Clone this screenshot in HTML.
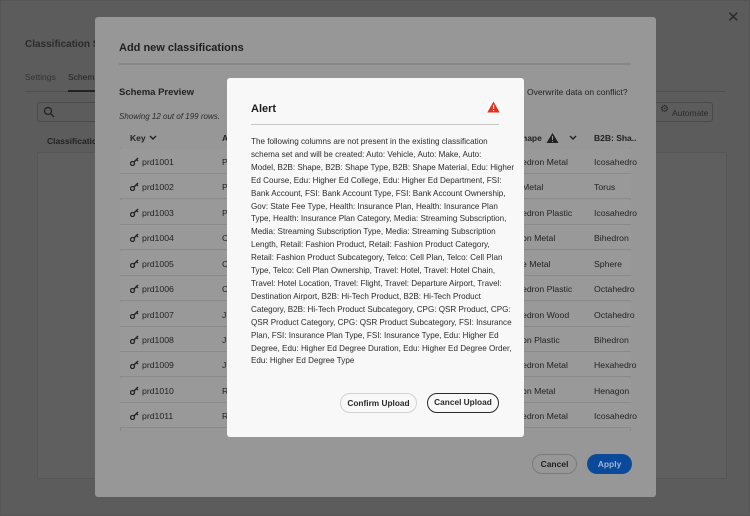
<!DOCTYPE html>
<html><head><meta charset="utf-8"><style>
*{box-sizing:border-box;margin:0;padding:0}
body{width:750px;height:516px;overflow:hidden;background:#5c5c5c;font-family:"Liberation Sans",sans-serif;position:relative;color:#1a1a1a}
.a{position:absolute}
.row{position:absolute;left:120px;width:511px;height:25px;border-bottom:1px solid #8a8a8a;background:#999;font-size:8.7px;color:#222}
.row span{position:absolute;top:8px}
.row svg{position:absolute;left:10px;top:8px}
</style></head><body>
<div class="a" style="left:0;top:0;width:750px;height:516px;border:1px solid #555"></div>
<div class="a" style="left:25px;top:39px;font-size:10px;font-weight:bold;color:#2b2b2b">Classification Se</div>
<div class="a" style="left:25px;top:72px;font-size:8.5px;color:#333">Settings</div>
<div class="a" style="left:68px;top:72px;font-size:8.5px;color:#222">Schema</div>
<div class="a" style="left:25px;top:91px;width:700px;height:1px;background:#4e4e4e"></div>
<div class="a" style="left:68px;top:90px;width:30px;height:2px;background:#222"></div>
<div class="a" style="left:37px;top:102px;width:80px;height:20px;border:1px solid #4a4a4a;border-radius:3px"></div>
<svg class="a" style="left:43px;top:106px" width="12" height="12"><circle cx="5" cy="5" r="3.5" fill="none" stroke="#222" stroke-width="1.3"/><line x1="7.6" y1="7.6" x2="11" y2="11" stroke="#222" stroke-width="1.3"/></svg>
<div class="a" style="left:47px;top:136px;font-size:8.5px;font-weight:bold;color:#222">Classification</div>
<div class="a" style="left:37px;top:152px;width:690px;height:327px;border:1px solid #555;background:#5f5f5f"></div>
<div class="a" style="left:651px;top:102px;width:62px;height:20px;border:1px solid #4a4a4a;border-radius:3px;font-size:8.5px;color:#2a2a2a;padding:5px 0 0 20px">Automate</div>
<div class="a" style="left:660px;top:104px;font-size:10px;color:#2a2a2a">⚙</div>
<div class="a" style="left:727px;top:8px;font-size:15px;color:#2a2a2a">✕</div>

<div class="a" style="left:95px;top:17px;width:561px;height:480px;background:#979797;border-radius:3px"></div>
<div class="a" style="left:119px;top:42px;font-size:11px;font-weight:bold;color:#1f1f1f">Add new classifications</div>
<div class="a" style="left:119px;top:63px;width:512px;height:2px;background:#888"></div>
<div class="a" style="left:119px;top:87px;font-size:9.5px;font-weight:bold;color:#222">Schema Preview</div>
<div class="a" style="left:119px;top:112px;font-size:8px;font-style:italic;color:#2a2a2a">Showing 12 out of 199 rows.</div>
<div class="a" style="left:527px;top:87px;font-size:8.5px;color:#222">Overwrite data on conflict?</div>
<div class="a" style="left:130px;top:133px;font-size:8.5px;font-weight:bold;color:#222">Key</div>
<svg class="a" style="left:149px;top:135px" width="8" height="6"><path d="M1 1L4 4L7 1" fill="none" stroke="#222" stroke-width="1.4"/></svg>
<div class="a" style="left:222px;top:133px;font-size:8.5px;font-weight:bold;color:#222">A</div>
<div class="a" style="left:522px;top:133px;font-size:8.5px;font-weight:bold;color:#222">hape</div>
<svg class="a" style="left:546px;top:132px" width="13" height="12"><path d="M6.5 1L12.5 11H0.5Z" fill="#222"/><rect x="6" y="4" width="1" height="4" fill="#999"/><rect x="6" y="9" width="1" height="1" fill="#999"/></svg>
<svg class="a" style="left:569px;top:135px" width="8" height="6"><path d="M1 1L4 4L7 1" fill="none" stroke="#222" stroke-width="1.4"/></svg>
<div class="a" style="left:594px;top:133px;font-size:8.5px;font-weight:bold;color:#222">B2B: Sha..</div>
<div class="a" style="left:120px;top:148px;width:511px;height:283px;border-left:1px solid #8a8a8a;border-right:1px solid #8a8a8a"></div>
<svg width="0" height="0" style="position:absolute"><defs><g id="key"><circle cx="2.5" cy="6.5" r="2" fill="none" stroke="#222" stroke-width="1.3"/><path d="M4 5L8 1M6.5 2.5L8 4" stroke="#222" stroke-width="1.3" fill="none"/></g></defs></svg>
<div class="row" style="top:149px"><svg width="9" height="9"><use href="#key"/></svg><span style="left:22px">prd1001</span><span style="left:102px">P</span><span style="left:402px">edron Metal</span><span style="left:474px">Icosahedro</span></div>
<div class="row" style="top:174px"><svg width="9" height="9"><use href="#key"/></svg><span style="left:22px">prd1002</span><span style="left:102px">P</span><span style="left:402px">Metal</span><span style="left:474px">Torus</span></div>
<div class="row" style="top:200px"><svg width="9" height="9"><use href="#key"/></svg><span style="left:22px">prd1003</span><span style="left:102px">P</span><span style="left:402px">edron Plastic</span><span style="left:474px">Icosahedro</span></div>
<div class="row" style="top:225px"><svg width="9" height="9"><use href="#key"/></svg><span style="left:22px">prd1004</span><span style="left:102px">C</span><span style="left:402px">on Metal</span><span style="left:474px">Bihedron</span></div>
<div class="row" style="top:251px"><svg width="9" height="9"><use href="#key"/></svg><span style="left:22px">prd1005</span><span style="left:102px">C</span><span style="left:402px">e Metal</span><span style="left:474px">Sphere</span></div>
<div class="row" style="top:276px"><svg width="9" height="9"><use href="#key"/></svg><span style="left:22px">prd1006</span><span style="left:102px">C</span><span style="left:402px">edron Plastic</span><span style="left:474px">Octahedro</span></div>
<div class="row" style="top:302px"><svg width="9" height="9"><use href="#key"/></svg><span style="left:22px">prd1007</span><span style="left:102px">J</span><span style="left:402px">edron Wood</span><span style="left:474px">Octahedro</span></div>
<div class="row" style="top:327px"><svg width="9" height="9"><use href="#key"/></svg><span style="left:22px">prd1008</span><span style="left:102px">J</span><span style="left:402px">on Plastic</span><span style="left:474px">Bihedron</span></div>
<div class="row" style="top:352px"><svg width="9" height="9"><use href="#key"/></svg><span style="left:22px">prd1009</span><span style="left:102px">J</span><span style="left:402px">edron Metal</span><span style="left:474px">Hexahedro</span></div>
<div class="row" style="top:378px"><svg width="9" height="9"><use href="#key"/></svg><span style="left:22px">prd1010</span><span style="left:102px">R</span><span style="left:402px">on Metal</span><span style="left:474px">Henagon</span></div>
<div class="row" style="top:403px"><svg width="9" height="9"><use href="#key"/></svg><span style="left:22px">prd1011</span><span style="left:102px">R</span><span style="left:402px">edron Metal</span><span style="left:474px">Icosahedro</span></div>
<div class="a" style="left:532px;top:454px;width:45px;height:20px;border:1px solid #7a7a7a;border-radius:10px;font-size:8.5px;font-weight:bold;color:#222;text-align:center;line-height:18px">Cancel</div>
<div class="a" style="left:587px;top:454px;width:45px;height:20px;background:#0b4a9a;border-radius:10px;font-size:8.5px;font-weight:bold;color:#9fb4d6;text-align:center;line-height:20px">Apply</div>

<div class="a" style="left:227px;top:78px;width:297px;height:359px;background:#f8f8f8;border-radius:3px"></div>
<div class="a" style="left:251px;top:103px;font-size:11px;font-weight:bold;color:#1d1d1d">Alert</div>
<svg class="a" style="left:487px;top:101px" width="13" height="12"><path d="M6.5 0.5L12.7 11.5H0.3Z" fill="#e0331f"/><rect x="6" y="3.8" width="1.1" height="4.3" fill="#fff"/><rect x="6" y="9" width="1.1" height="1.2" fill="#fff"/></svg>
<div class="a" style="left:251px;top:124px;width:248px;height:1px;background:#c8c8c8"></div>
<div class="a" style="left:251px;top:136px;white-space:nowrap;font-size:8.1px;line-height:12.9px;color:#2b2b2b">The following columns are not present in the existing classification<br>schema set and will be created: Auto: Vehicle, Auto: Make, Auto:<br>Model, B2B: Shape, B2B: Shape Type, B2B: Shape Material, Edu: Higher<br>Ed Course, Edu: Higher Ed College, Edu: Higher Ed Department, FSI:<br>Bank Account, FSI: Bank Account Type, FSI: Bank Account Ownership,<br>Gov: State Fee Type, Health: Insurance Plan, Health: Insurance Plan<br>Type, Health: Insurance Plan Category, Media: Streaming Subscription,<br>Media: Streaming Subscription Type, Media: Streaming Subscription<br>Length, Retail: Fashion Product, Retail: Fashion Product Category,<br>Retail: Fashion Product Subcategory, Telco: Cell Plan, Telco: Cell Plan<br>Type, Telco: Cell Plan Ownership, Travel: Hotel, Travel: Hotel Chain,<br>Travel: Hotel Location, Travel: Flight, Travel: Departure Airport, Travel:<br>Destination Airport, B2B: Hi-Tech Product, B2B: Hi-Tech Product<br>Category, B2B: Hi-Tech Product Subcategory, CPG: QSR Product, CPG:<br>QSR Product Category, CPG: QSR Product Subcategory, FSI: Insurance<br>Plan, FSI: Insurance Plan Type, FSI: Insurance Type, Edu: Higher Ed<br>Degree, Edu: Higher Ed Degree Duration, Edu: Higher Ed Degree Order,<br>Edu: Higher Ed Degree Type</div>
<div class="a" style="left:340px;top:393px;width:77px;height:20px;border:1px solid #d2d2d2;border-radius:10px;font-size:8.3px;font-weight:bold;color:#2a2a2a;text-align:center;line-height:18px">Confirm Upload</div>
<div class="a" style="left:427px;top:393px;width:72px;height:20px;border:1.5px solid #2a2a2a;border-radius:10px;font-size:8.3px;font-weight:bold;color:#2a2a2a;text-align:center;line-height:17px">Cancel Upload</div>
</body></html>
